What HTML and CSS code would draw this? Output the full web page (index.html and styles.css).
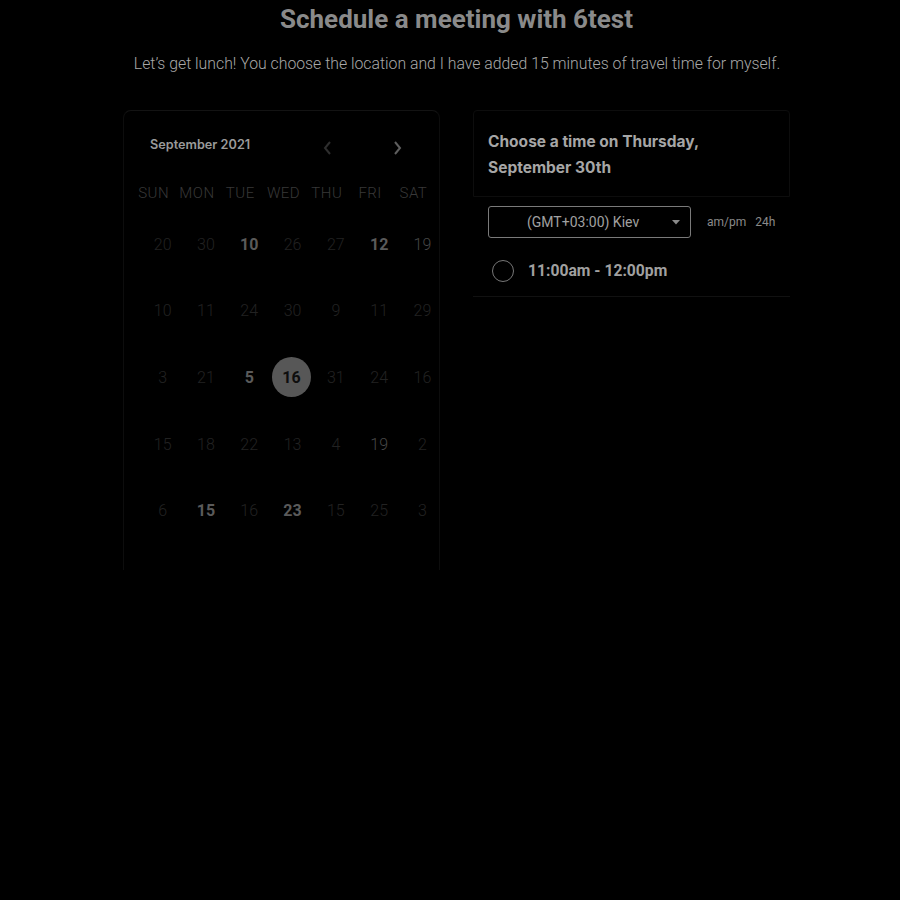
FILE: index.html
```html
<!DOCTYPE html>
<html>
<head>
<meta charset="utf-8">
<link rel="stylesheet" href="styles.css">
</head>
<body>
<div class="page">
  <h1 class="title">Schedule a meeting with 6test</h1>
  <p class="subtitle">Let’s get lunch! You choose the location and I have added 15 minutes of travel time for myself.</p>
  <div class="main">
    <section class="calendar">
      <div class="cal-head">
        <span class="month">September 2021</span>
        <div class="arrows">
          <svg class="arrow dim" width="12" height="16" viewBox="0 0 12 16"><path d="M8 2 L3 8 L8 14" fill="none" stroke="currentColor" stroke-width="2"/></svg>
          <svg class="arrow" width="12" height="16" viewBox="0 0 12 16"><path d="M4 2 L9 8 L4 14" fill="none" stroke="currentColor" stroke-width="2"/></svg>
        </div>
      </div>
      <div class="weekdays">
        <span>SUN</span><span>MON</span><span>TUE</span><span>WED</span><span>THU</span><span>FRI</span><span>SAT</span>
      </div>
      <div class="days">
        <span>20</span><span>30</span><span class="b">10</span><span>26</span><span>27</span><span class="b">12</span><span class="m">19</span>
        <span>10</span><span>11</span><span>24</span><span>30</span><span>9</span><span>11</span><span>29</span>
        <span>3</span><span>21</span><span class="b">5</span><span class="sel"><i>16</i></span><span>31</span><span>24</span><span>16</span>
        <span>15</span><span>18</span><span>22</span><span>13</span><span>4</span><span class="m">19</span><span>2</span>
        <span>6</span><span class="b">15</span><span>16</span><span class="b">23</span><span>15</span><span>25</span><span>3</span>
      </div>
    </section>
    <section class="times">
      <div class="times-head">Choose a time on Thursday,<br>September 30th</div>
      <div class="controls">
        <div class="select">
          <span>(GMT+03:00) Kiev</span>
          <svg class="caret" width="8" height="5" viewBox="0 0 8 5"><path d="M0 0 L8 0 L4 4.5 Z" fill="currentColor"/></svg>
        </div>
        <div class="fmt"><span>am/pm</span><span>24h</span></div>
      </div>
      <div class="slot">
        <span class="radio"></span>
        <span class="slot-time">11:00am - 12:00pm</span>
      </div>
    </section>
  </div>
</div>
</body>
</html>
```
FILE: styles.css
```css
html, body {
  margin: 0;
  padding: 0;
  background: #000;
}
.page {
  width: 900px;
  height: 900px;
  font-family: Roboto, "Liberation Sans", sans-serif;
}
.title {
  margin: 0;
  padding-top: 4px;
  padding-left: 13px;
  text-align: center;
  font-size: 26px;
  line-height: 30px;
  font-weight: 700;
  color: #8a8a8a;
}
.subtitle {
  margin: 20px 0 0;
  padding-left: 14px;
  text-align: center;
  font-size: 15.8px;
  line-height: 20px;
  font-weight: 300;
  color: #a8a8a8;
}
.main {
  display: flex;
  margin-top: 36px;
  margin-left: 123px;
  gap: 33px;
  align-items: flex-start;
}
.calendar {
  width: 317px;
  height: 460px;
  box-sizing: border-box;
  border: 1px solid #0d0d0d;
  border-top-color: #131313;
  border-bottom: none;
  border-radius: 8px 8px 0 0;
}
.cal-head {
  display: flex;
  align-items: center;
  height: 22px;
  margin-top: 26px;
  padding-left: 26px;
}
.month {
  font-family: Inter, sans-serif;
  font-size: 12.7px;
  font-weight: 600;
  color: #9a9a9a;
  width: 172px;
  position: relative;
  top: -4px;
}
.arrows {
  display: flex;
  gap: 57px;
  color: #5e5e5e;
}
.arrow.dim {
  color: #2e2e2e;
}
.weekdays {
  display: grid;
  grid-template-columns: repeat(7, 43.3px);
  margin-top: 24px;
  padding-left: 8px;
  font-size: 15px;
  font-weight: 300;
  line-height: 20px;
  color: #383838;
  letter-spacing: 0.5px;
}
.weekdays span, .days span {
  text-align: center;
}
.days {
  display: grid;
  grid-template-columns: repeat(7, 43.3px);
  grid-auto-rows: 66.7px;
  margin-top: 21px;
  padding-left: 17px;
  font-size: 16px;
  font-weight: 300;
  color: #222;
}
.days span {
  display: flex;
  align-items: center;
  justify-content: center;
  height: 40px;
}
.days .b {
  font-weight: 700;
  color: #5a5a5a;
}
.days .m {
  color: #474747;
}
.days .sel {
  margin-left: -2px;
}
.days .sel i {
  font-style: normal;
  display: flex;
  align-items: center;
  justify-content: center;
  width: 39px;
  height: 40px;
  border-radius: 50%;
  background: #575757;
  color: #0e0e0e;
  font-weight: 700;
}
.times {
  width: 317px;
  font-family: Inter, sans-serif;
}
.times-head {
  border: 1px solid #0d0d0d;
  border-radius: 4px 4px 0 0;
  padding: 18px 14px 15px;
  font-size: 15.5px;
  line-height: 26px;
  font-weight: 700;
  color: #a6a6a6;
}
.controls {
  display: flex;
  align-items: center;
  margin-top: 9px;
  padding-left: 15px;
}
.select {
  width: 203px;
  height: 32px;
  box-sizing: border-box;
  border: 1px solid #7a7a7a;
  border-radius: 3px;
  display: flex;
  align-items: center;
  font-family: Roboto, sans-serif;
  font-size: 14px;
  color: #a0a0a0;
  position: relative;
}
.select span {
  margin-left: 38px;
}
.select .caret {
  position: absolute;
  right: 10px;
  top: 13px;
  color: #8a8a8a;
}
.fmt {
  display: flex;
  gap: 9px;
  margin-left: 16px;
  font-family: Roboto, sans-serif;
  font-size: 12px;
  color: #8a8a8a;
}
.slot {
  display: flex;
  align-items: center;
  height: 59px;
  padding-top: 7px;
  box-sizing: border-box;
  padding-left: 19px;
  border-bottom: 1px solid #111;
}
.radio {
  width: 20px;
  height: 20px;
  border: 1.5px solid #777;
  border-radius: 50%;
}
.slot-time {
  margin-left: 14px;
  font-family: Roboto, sans-serif;
  font-size: 15.7px;
  font-weight: 700;
  color: #a0a0a0;
}
```
